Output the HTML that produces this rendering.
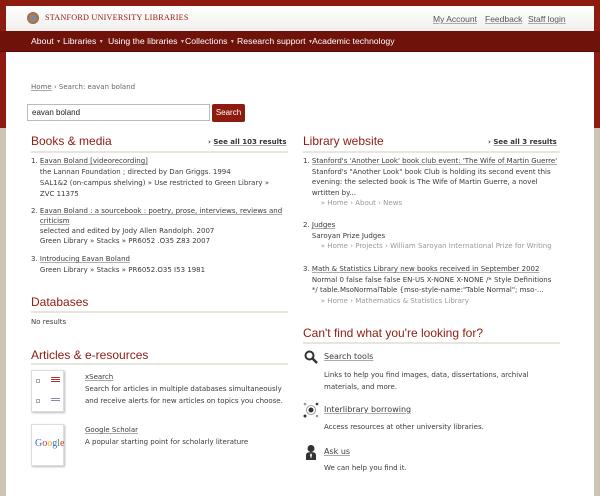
<!DOCTYPE html>
<html><head><meta charset="utf-8"><style>
*{margin:0;padding:0;box-sizing:border-box}
body{width:600px;height:483px;overflow:hidden;background:#cdc4b4;font-family:"DejaVu Sans","Liberation Sans",sans-serif;font-size:7px;color:#3a3a3a;position:relative}
.red{position:absolute;left:0;top:0;width:600px;height:128px;background:#8e1b10}
.page{position:absolute;left:6px;top:6px;width:588px;height:490px;background:#fff}
.hdr{position:absolute;left:6px;top:6px;width:588px;height:25px;background:linear-gradient(#fff,#f0efed)}
.nav{position:absolute;left:0;top:31px;width:600px;height:21px;background:#6e120a;border-bottom:1px solid #5a0e07}
.nav span{position:absolute;top:5px;color:#fff;font-family:"Liberation Sans",sans-serif;font-size:8.7px;white-space:nowrap}
.nav i{font-style:normal;font-size:5px;color:#ccc;vertical-align:1px}
.a{position:absolute;white-space:nowrap}
u{text-decoration:underline;text-decoration-color:#aaa}
h2{position:absolute;font-family:"Liberation Sans",sans-serif;font-weight:normal;font-size:12px;color:#8e1b10;white-space:nowrap}
.rule{position:absolute;height:2px;background:#e8e5dd}
.see{position:absolute;font-weight:bold;font-size:7px;color:#333}
.thumb{position:absolute;width:33px;height:42px;border:1px solid #ddd;box-shadow:1px 1px 2px #bbb;background:#fff}
.crumb{color:#999}
</style></head><body>
<div class="red"></div>
<div class="page"></div>
<div class="hdr"></div>
<div class="a" style="left:27px;top:12px;width:12px;height:12px;border-radius:50%;background:radial-gradient(#6b8fa8 25%,#b08060 30%,#9a6a4a 70%,#c8a080)"></div>
<div class="a" style="left:45px;top:13px;font-family:'Liberation Serif',serif;font-size:8.2px;color:#8e1b10;letter-spacing:.2px">STANFORD UNIVERSITY LIBRARIES</div>
<div class="a" style="left:433px;top:14px;font-size:8.5px;color:#555;font-family:'Liberation Sans',sans-serif"><u>My Account</u></div>
<div class="a" style="left:485px;top:14px;font-size:8.5px;color:#555;font-family:'Liberation Sans',sans-serif"><u>Feedback</u></div>
<div class="a" style="left:528px;top:14px;font-size:8.5px;color:#555;font-family:'Liberation Sans',sans-serif"><u>Staff login</u></div>
<div class="nav">
<span style="left:31px">About <i>▼</i></span><span style="left:63px">Libraries <i>▼</i></span><span style="left:108px">Using the libraries <i>▼</i></span><span style="left:185px">Collections <i>▼</i></span><span style="left:237px">Research support <i>▼</i></span><span style="left:312px">Academic technology</span>
</div>
<div class="a" style="left:31px;top:83px;color:#666"><u>Home</u> › Search: eavan boland</div>
<div class="a" style="left:27px;top:104px;width:183px;height:17px;border:1px solid #bbb;padding:3px 4px;font-size:8px;color:#222;font-family:'Liberation Sans',sans-serif">eavan boland</div>
<div class="a" style="left:212px;top:104px;width:33px;height:18px;background:#8e1b10;border-radius:2px;color:#fff;font-size:8px;text-align:center;line-height:18px;font-family:'Liberation Sans',sans-serif">Search</div>

<h2 style="left:31px;top:134px">Books &amp; media</h2>
<div class="see" style="left:208px;top:138px">› <u>See all 103 results</u></div>
<div class="rule" style="left:31px;top:151px;width:257px"></div>
<div class="a" style="left:31px;top:156px;line-height:11px">1. <u>Eavan Boland [videorecording]</u><br>&nbsp;&nbsp;&nbsp;&nbsp;the Lannan Foundation ; directed by Dan Griggs. 1994<br>&nbsp;&nbsp;&nbsp;&nbsp;SAL1&amp;2 (on-campus shelving) » Use restricted to Green Library »<br>&nbsp;&nbsp;&nbsp;&nbsp;ZVC 11375</div>
<div class="a" style="left:31px;top:206px;line-height:10px">2. <u>Eavan Boland : a sourcebook : poetry, prose, interviews, reviews and</u><br>&nbsp;&nbsp;&nbsp;&nbsp;<u>criticism</u><br>&nbsp;&nbsp;&nbsp;&nbsp;selected and edited by Jody Allen Randolph. 2007<br>&nbsp;&nbsp;&nbsp;&nbsp;Green Library » Stacks » PR6052 .O35 Z83 2007</div>
<div class="a" style="left:31px;top:254px;line-height:11px">3. <u>Introducing Eavan Boland</u><br>&nbsp;&nbsp;&nbsp;&nbsp;Green Library » Stacks » PR6052.O35 I53 1981</div>

<h2 style="left:31px;top:295px">Databases</h2>
<div class="rule" style="left:31px;top:311px;width:257px"></div>
<div class="a" style="left:31px;top:318px">No results</div>

<h2 style="left:31px;top:348px">Articles &amp; e-resources</h2>
<div class="rule" style="left:31px;top:363px;width:257px"></div>
<div class="thumb" style="left:31px;top:370px"><div class="a" style="left:4px;top:8px;width:4px;height:4px;border:1px solid #aaa"></div><div class="a" style="left:19px;top:6px;width:9px;height:6px;background:repeating-linear-gradient(#a33 0 1px,#fff 1px 2px)"></div><div class="a" style="left:4px;top:28px;width:4px;height:4px;border:1px solid #aaa"></div><div class="a" style="left:19px;top:27px;width:9px;height:4px;background:repeating-linear-gradient(#88a 0 1px,#fff 1px 2px)"></div></div>
<div class="a" style="left:85px;top:371px;line-height:12px"><u>xSearch</u><br>Search for articles in multiple databases simultaneously<br>and receive alerts for new articles on topics you choose.</div>
<div class="thumb" style="left:31px;top:424px"><div class="a" style="left:3px;top:13px;font-family:'Liberation Serif',serif;font-size:10px"><span style="color:#3366cc">G</span><span style="color:#c33">o</span><span style="color:#e9a800">o</span><span style="color:#3366cc">g</span><span style="color:#393">l</span><span style="color:#c33">e</span></div></div>
<div class="a" style="left:85px;top:424px;line-height:12px"><u>Google Scholar</u><br>A popular starting point for scholarly literature</div>

<h2 style="left:303px;top:134px">Library website</h2>
<div class="see" style="left:488px;top:138px">› <u>See all 3 results</u></div>
<div class="rule" style="left:303px;top:151px;width:257px"></div>
<div class="a" style="left:303px;top:156px;line-height:10.5px">1. <u>Stanford's 'Another Look' book club event: 'The Wife of Martin Guerre'</u><br>&nbsp;&nbsp;&nbsp;&nbsp;Stanford's "Another Look" book Club is holding its second event this<br>&nbsp;&nbsp;&nbsp;&nbsp;evening: the selected book is The Wife of Martin Guerre, a novel<br>&nbsp;&nbsp;&nbsp;&nbsp;wrtitten by...<br><span class="crumb">&nbsp;&nbsp;&nbsp;&nbsp;&nbsp;&nbsp;&nbsp;&nbsp;» Home › About › News</span></div>
<div class="a" style="left:303px;top:220px;line-height:10.5px">2. <u>Judges</u><br>&nbsp;&nbsp;&nbsp;&nbsp;Saroyan Prize Judges<br><span class="crumb">&nbsp;&nbsp;&nbsp;&nbsp;&nbsp;&nbsp;&nbsp;&nbsp;» Home › Projects › William Saroyan International Prize for Writing</span></div>
<div class="a" style="left:303px;top:264px;line-height:10.5px">3. <u>Math &amp; Statistics Library new books received in September 2002</u><br>&nbsp;&nbsp;&nbsp;&nbsp;Normal 0 false false false EN-US X-NONE X-NONE /* Style Definitions<br>&nbsp;&nbsp;&nbsp;&nbsp;*/ table.MsoNormalTable {mso-style-name:"Table Normal"; mso-...<br><span class="crumb">&nbsp;&nbsp;&nbsp;&nbsp;&nbsp;&nbsp;&nbsp;&nbsp;» Home › Mathematics &amp; Statistics Library</span></div>

<h2 style="left:303px;top:326px">Can't find what you're looking for?</h2>
<div class="rule" style="left:303px;top:342px;width:257px"></div>
<svg class="a" style="left:304px;top:350px" width="14" height="14"><circle cx="5.5" cy="5.5" r="4" fill="none" stroke="#333" stroke-width="2"/><path d="M8.5 8.5L13 13" stroke="#333" stroke-width="2.5"/></svg>
<div class="a" style="left:324px;top:352px;font-size:8px"><u>Search tools</u></div>
<div class="a" style="left:324px;top:369px;line-height:12px">Links to help you find images, data, dissertations, archival<br>materials, and more.</div>
<svg class="a" style="left:303px;top:402px" width="16" height="16"><circle cx="8" cy="8" r="2.5" fill="#333"/><circle cx="8" cy="8" r="4.5" fill="none" stroke="#888" stroke-width=".8"/><circle cx="2" cy="2" r="1.3" fill="#999"/><circle cx="14" cy="2" r="1.3" fill="#333"/><circle cx="2" cy="14" r="1.5" fill="#333"/><circle cx="14" cy="14" r="1.3" fill="#999"/></svg>
<div class="a" style="left:324px;top:405px;font-size:8px"><u>Interlibrary borrowing</u></div>
<div class="a" style="left:324px;top:423px">Access resources at other university libraries.</div>
<svg class="a" style="left:305px;top:444px" width="12" height="16"><circle cx="6" cy="4.5" r="3.5" fill="#333"/><path d="M1 16V11q0-3 5-3t5 3v5z" fill="#333"/><path d="M6 9l-1 2 1 4 1-4z" fill="#fff"/></svg>
<div class="a" style="left:324px;top:447px;font-size:8px"><u>Ask us</u></div>
<div class="a" style="left:324px;top:464px">We can help you find it.</div>
</body></html>
